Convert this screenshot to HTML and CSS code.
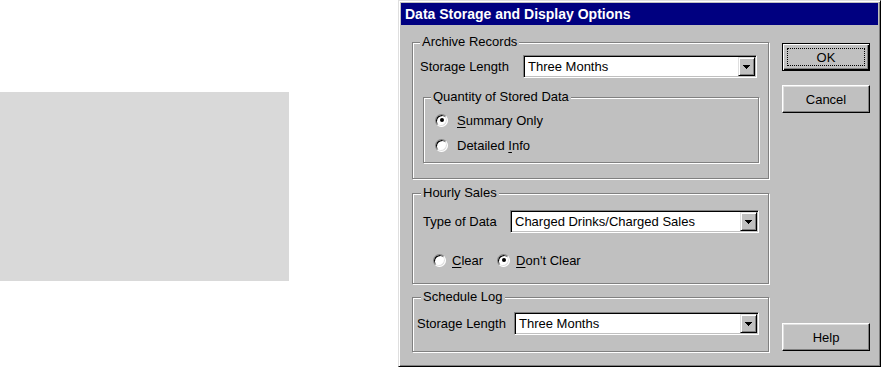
FILE: index.html
```html
<!DOCTYPE html>
<html>
<head>
<meta charset="utf-8">
<title>Data Storage and Display Options</title>
<link rel="stylesheet" href="styles.css">
</head>
<body>
<div class="page">
  <div class="placeholder"></div>
  <div class="dialog">
    <div class="titlebar">Data Storage and Display Options</div>
    <div class="dlg-body">
      <div class="groups">
        <div class="group archive">
          <div class="legend">Archive Records</div>
          <div class="row">
            <span class="label">Storage Length</span>
            <div class="combo">
              <span class="combo-text">Three Months</span>
              <span class="combo-btn"><svg width="7" height="4" viewBox="0 0 7 4" shape-rendering="crispEdges"><rect x="0" y="0" width="7" height="1"/><rect x="1" y="1" width="5" height="1"/><rect x="2" y="2" width="3" height="1"/><rect x="3" y="3" width="1" height="1"/></svg></span>
            </div>
          </div>
          <div class="group quantity">
            <div class="legend">Quantity of Stored Data</div>
            <div class="radio-row"><span class="radio on"></span><span><u>S</u>ummary Only</span></div>
            <div class="radio-row"><span class="radio"></span><span>Detailed <u>I</u>nfo</span></div>
          </div>
        </div>

        <div class="group hourly">
          <div class="legend">Hourly Sales</div>
          <div class="row">
            <span class="label">Type of Data</span>
            <div class="combo">
              <span class="combo-text">Charged Drinks/Charged Sales</span>
              <span class="combo-btn"><svg width="7" height="4" viewBox="0 0 7 4" shape-rendering="crispEdges"><rect x="0" y="0" width="7" height="1"/><rect x="1" y="1" width="5" height="1"/><rect x="2" y="2" width="3" height="1"/><rect x="3" y="3" width="1" height="1"/></svg></span>
            </div>
          </div>
          <div class="radio-inline">
            <span class="radio-item"><span class="radio"></span><span><u>C</u>lear</span></span>
            <span class="radio-item second"><span class="radio on"></span><span><u>D</u>on't Clear</span></span>
          </div>
        </div>

        <div class="group schedule">
          <div class="legend">Schedule Log</div>
          <div class="row">
            <span class="label">Storage Length</span>
            <div class="combo">
              <span class="combo-text">Three Months</span>
              <span class="combo-btn"><svg width="7" height="4" viewBox="0 0 7 4" shape-rendering="crispEdges"><rect x="0" y="0" width="7" height="1"/><rect x="1" y="1" width="5" height="1"/><rect x="2" y="2" width="3" height="1"/><rect x="3" y="3" width="1" height="1"/></svg></span>
            </div>
          </div>
        </div>
      </div>

      <div class="buttons">
        <div class="btn default"><span class="focus">OK</span></div>
        <div class="btn cancel">Cancel</div>
        <div class="btn help">Help</div>
      </div>
    </div>
  </div>
</div>
</body>
</html>
```
FILE: styles.css
```css
html, body {
  margin: 0;
  padding: 0;
  background: #ffffff;
}

body {
  width: 881px;
  height: 368px;
  overflow: hidden;
  font-family: "Liberation Sans", Arial, sans-serif;
  font-size: 13px;
  color: #000;
}

.page {
  display: flex;
  align-items: flex-start;
}

.placeholder {
  width: 289px;
  height: 189px;
  margin-top: 92px;
  background: #d9d9d9;
  flex: none;
}

.dialog {
  margin-left: 109px;
  width: 483px;
  height: 367px;
  box-sizing: border-box;
  background: #c0c0c0;
  border: 1px solid;
  border-color: #dfdfdf #000 #000 #dfdfdf;
  box-shadow: inset 1px 1px #fff, inset -1px -1px #808080;
  padding: 2px;
  flex: none;
}

.titlebar {
  height: 22px;
  line-height: 22px;
  background: #000080;
  color: #fff;
  font-weight: bold;
  font-size: 14px;
  padding-left: 4px;
  white-space: nowrap;
}

.dlg-body {
  display: flex;
  padding: 17px 0 0 11px;
}

.groups {
  width: 358px;
  flex: none;
}

.group {
  box-sizing: border-box;
  border: 1px solid #808080;
  box-shadow: inset 1px 1px #fff, 1px 1px #fff;
}

.legend {
  width: fit-content;
  margin-top: -8px;
  padding: 0 2px;
  height: 14px;
  line-height: 14px;
  background: #c0c0c0;
  white-space: nowrap;
}

.row {
  display: flex;
  align-items: center;
}

.label {
  flex: none;
  white-space: nowrap;
}

.combo {
  display: flex;
  align-items: stretch;
  box-sizing: border-box;
  height: 23px;
  background: #fff;
  border: 1px solid;
  border-color: #808080 #fff #fff #808080;
  box-shadow: inset 1px 1px #000, inset -1px -1px #c0c0c0;
  padding: 1px;
}

.combo-text {
  flex: 1;
  padding-left: 3px;
  line-height: 19px;
  white-space: nowrap;
  overflow: hidden;
}

.combo-btn {
  flex: none;
  width: 17px;
  box-sizing: border-box;
  background: #c0c0c0;
  border: 1px solid;
  border-color: #dfdfdf #000 #000 #dfdfdf;
  box-shadow: inset 1px 1px #fff, inset -1px -1px #808080;
  display: flex;
  align-items: center;
  justify-content: center;
}

.combo-btn svg {
  display: block;
  fill: #000;
}

/* Archive Records */
.archive {
  width: 357px;
  padding-bottom: 15px;
}
.archive > .legend { margin-left: 7px; }
.archive > .row { margin: 6px 0 0 7px; }
.archive .label { width: 103px; }
.archive .combo { width: 234px; }

.quantity {
  width: 336px;
  margin: 19px 0 0 10px;
  padding-bottom: 7px;
}
.quantity > .legend { margin-left: 7px; }

.radio-row {
  display: flex;
  align-items: center;
  height: 20px;
  margin: 5px 0 0 11px;
  gap: 9px;
}
.quantity > .legend + .radio-row { margin-top: 6px; }

.radio {
  flex: none;
  width: 13px;
  height: 13px;
  box-sizing: border-box;
  border-radius: 50%;
  background: #fff;
  border: 1px solid;
  border-color: #808080 #fff #fff #808080;
  box-shadow: inset 1px 1px #000, inset -1px -1px #dfdfdf;
  display: flex;
  align-items: center;
  justify-content: center;
}
.radio.on::after {
  content: "";
  width: 4px;
  height: 4px;
  border-radius: 50%;
  background: #000;
}

u { text-decoration-thickness: 1px; text-underline-offset: 2px; }

/* Hourly Sales */
.hourly {
  width: 357px;
  margin-top: 14px;
  padding-bottom: 13px;
}
.hourly > .legend { margin-left: 8px; }
.hourly > .row { margin: 10px 0 0 10px; }
.hourly .label { width: 87px; }
.hourly .combo { width: 249px; }

.radio-inline {
  display: flex;
  align-items: center;
  height: 20px;
  margin: 17px 0 0 20px;
}
.radio-item {
  display: flex;
  align-items: center;
  gap: 6px;
}
.radio-item.second { margin-left: 14px; }

/* Schedule Log */
.schedule {
  width: 357px;
  margin-top: 13px;
  padding-bottom: 16px;
}
.schedule > .legend { margin-left: 8px; }
.schedule > .row { margin: 8px 0 0 4px; }
.schedule .label { width: 97px; }
.schedule .combo { width: 245px; }

/* Buttons */
.buttons {
  display: flex;
  flex-direction: column;
  width: 88px;
  margin-left: 12px;
  flex: none;
}

.btn {
  box-sizing: border-box;
  width: 88px;
  height: 28px;
  background: #c0c0c0;
  border: 1px solid;
  border-color: #fff #000 #000 #fff;
  box-shadow: inset -1px -1px #808080, inset 1px 1px #dfdfdf;
  display: flex;
  align-items: center;
  justify-content: center;
}

.btn.default {
  margin-top: 1px;
  border-color: #000;
  box-shadow: inset 1px 1px #fff, inset -1px -1px #000, inset -2px -2px #808080;
  padding: 4px;
}

.btn .focus {
  flex: 1;
  align-self: stretch;
  border: 1px dotted #000;
  display: flex;
  align-items: center;
  justify-content: center;
}

.btn.cancel { margin-top: 14px; }
.btn.help { margin-top: auto; margin-bottom: 1px; }
```
